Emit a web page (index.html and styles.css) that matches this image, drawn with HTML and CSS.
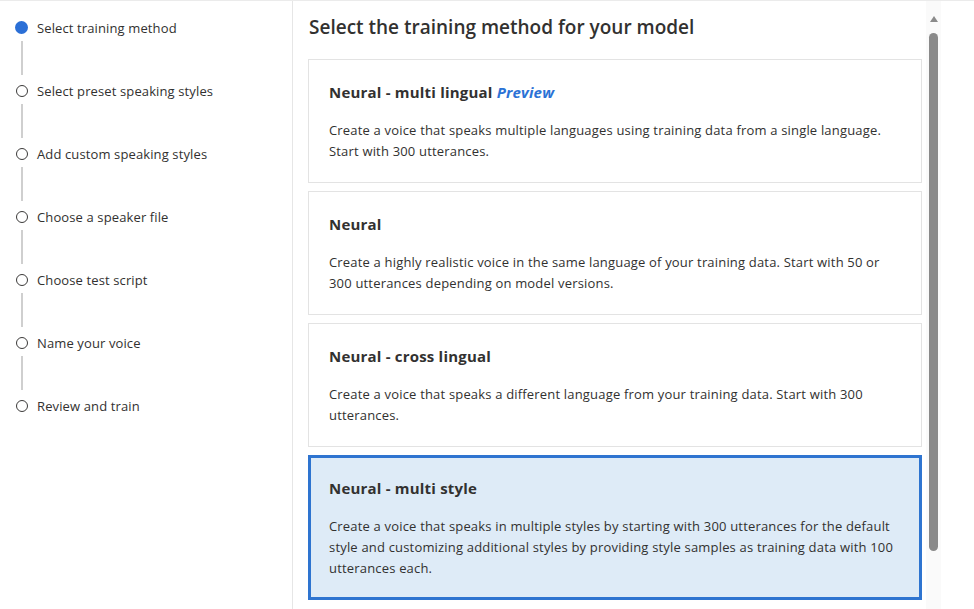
FILE: index.html
```html
<!DOCTYPE html>
<html lang="en">
<head>
<meta charset="utf-8">
<title>Select training method</title>
<link rel="stylesheet" href="styles.css">
</head>
<body>
<div class="app">
  <nav class="steps">
    <div class="step active"><span class="dot"></span><span class="label">Select training method</span></div>
    <div class="connector"></div>
    <div class="step"><span class="dot"></span><span class="label">Select preset speaking styles</span></div>
    <div class="connector"></div>
    <div class="step"><span class="dot"></span><span class="label">Add custom speaking styles</span></div>
    <div class="connector"></div>
    <div class="step"><span class="dot"></span><span class="label">Choose a speaker file</span></div>
    <div class="connector"></div>
    <div class="step"><span class="dot"></span><span class="label">Choose test script</span></div>
    <div class="connector"></div>
    <div class="step"><span class="dot"></span><span class="label">Name your voice</span></div>
    <div class="connector"></div>
    <div class="step"><span class="dot"></span><span class="label">Review and train</span></div>
  </nav>
  <main class="main">
    <div class="content">
      <h1 class="title">Select the training method for your model</h1>
      <div class="cards">
        <div class="card">
          <div class="card-title">Neural - multi lingual <em class="preview">Preview</em></div>
          <p class="card-desc">Create a voice that speaks multiple languages using training data from a single language. Start with 300 utterances.</p>
        </div>
        <div class="card">
          <div class="card-title">Neural</div>
          <p class="card-desc">Create a highly realistic voice in the same language of your training data. Start with 50 or 300 utterances depending on model versions.</p>
        </div>
        <div class="card">
          <div class="card-title">Neural - cross lingual</div>
          <p class="card-desc">Create a voice that speaks a different language from your training data. Start with 300 utterances.</p>
        </div>
        <div class="card selected">
          <div class="card-title">Neural - multi style</div>
          <p class="card-desc">Create a voice that speaks in multiple styles by starting with 300 utterances for the default style and customizing additional styles by providing style samples as training data with 100 utterances each.</p>
        </div>
      </div>
    </div>
    <div class="scrollbar">
      <div class="arrow"></div>
      <div class="thumb"></div>
    </div>
  </main>
</div>
</body>
</html>
```

FILE: styles.css
```css
* { box-sizing: border-box; }
html, body { margin: 0; padding: 0; background: #ffffff; }
body {
  font-family: "Open Sans", "Noto Sans", sans-serif;
  color: #323130;
  width: 974px;
  height: 609px;
  overflow: hidden;
}
.app {
  display: flex;
  height: 609px;
  border-top: 1px solid #ebebeb;
}
.steps {
  width: 293px;
  flex: none;
  border-right: 1px solid #e6e6e6;
  padding: 16px 0 0 15px;
  display: flex;
  flex-direction: column;
}
.step {
  display: flex;
  align-items: center;
  height: 21px;
  font-size: 13px;
  letter-spacing: 0.12px;
}
.dot {
  width: 13px;
  height: 13px;
  flex: none;
  display: flex;
  align-items: center;
  justify-content: center;
  margin-right: 9px;
}
.dot::before {
  content: "";
  width: 10px;
  height: 10px;
  border: 1.3px solid #3b3a39;
  border-radius: 50%;
}
.step.active .dot::before {
  width: 13px;
  height: 13px;
  border: none;
  background: #2b6fd6;
}
.label { color: #323130; }
.connector {
  height: 42px;
  padding: 3px 0 5px 6px;
}
.connector::before {
  content: "";
  display: block;
  width: 2px;
  height: 100%;
  background: #cfcfcf;
}
.main {
  flex: 1;
  display: flex;
  overflow: hidden;
}
.content {
  width: 630px;
  padding-left: 15px;
  flex: none;
}
.title {
  font-size: 19px;
  font-weight: 600;
  margin: 12px 0 0 1px;
  line-height: 28px;
  color: #323130;
}
.cards {
  margin-top: 18px;
  display: flex;
  flex-direction: column;
  gap: 8px;
  width: 614px;
}
.card {
  border: 1px solid #e3e3e3;
  padding: 22px 20px 20px 20px;
  background: #ffffff;
}
.card.selected {
  border: 3px solid #2e74d0;
  background: #deebf7;
  padding: 20px 18px 18px 18px;
}
.card-title {
  font-size: 15px;
  font-weight: 700;
  line-height: 20px;
  letter-spacing: 0.2px;
  color: #323130;
}
.preview {
  color: #2b72d6;
  font-style: italic;
}
.card-desc {
  margin: 18px 0 0 0;
  font-size: 13px;
  line-height: 21px;
  letter-spacing: 0.18px;
  color: #323130;
}
.scrollbar {
  width: 15px;
  margin-left: 3px;
  background: #fafafa;
  display: flex;
  flex-direction: column;
  align-items: center;
  padding-top: 15px;
}
.arrow {
  width: 0;
  height: 0;
  border-left: 4.5px solid transparent;
  border-right: 4.5px solid transparent;
  border-bottom: 6px solid #8a8a8a;
}
.thumb {
  margin-top: 11px;
  width: 9px;
  height: 518px;
  background: #8a8a8a;
  border-radius: 5px;
}
```
